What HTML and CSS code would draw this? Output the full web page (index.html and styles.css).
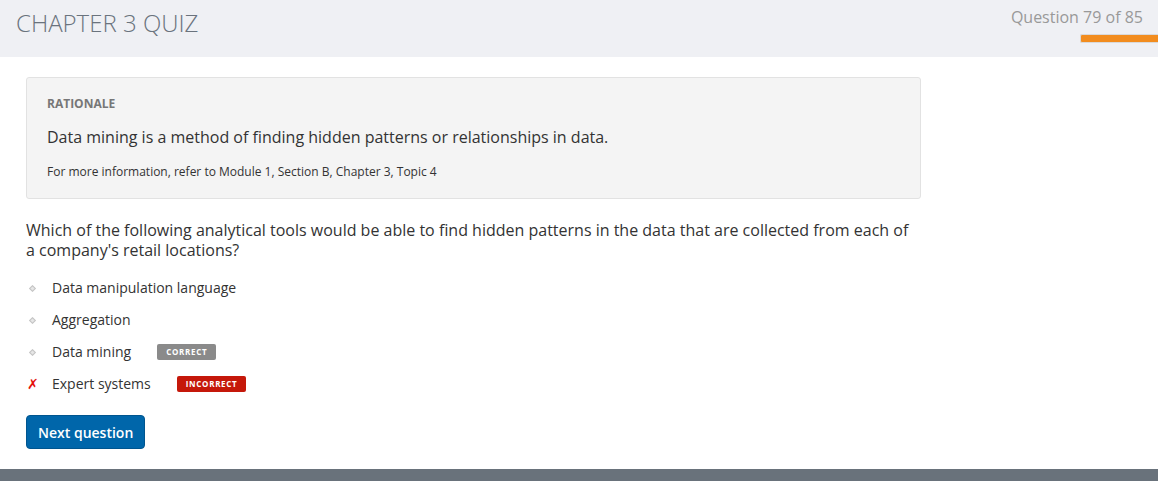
FILE: index.html
```html
<!DOCTYPE html>
<html>
<head>
<meta charset="utf-8">
<link rel="stylesheet" href="styles.css">
</head>
<body>
<header class="topbar">
  <h1 class="title">CHAPTER 3 QUIZ</h1>
  <div class="progress">
    <div class="progress-label">Question 79 of 85</div>
    <div class="progress-bar"></div>
  </div>
</header>
<main class="content">
  <section class="rationale">
    <div class="rationale-head">RATIONALE</div>
    <p class="rationale-text">Data mining is a method of finding hidden patterns or relationships in data.</p>
    <p class="rationale-ref">For more information, refer to Module 1, Section B, Chapter 3, Topic 4</p>
  </section>
  <p class="question">Which of the following analytical tools would be able to find hidden patterns in the data that are collected from each of a company's retail locations?</p>
  <ul class="options">
    <li class="option"><span class="marker"><span class="dot"></span></span><span class="opt-text">Data manipulation language</span></li>
    <li class="option"><span class="marker"><span class="dot"></span></span><span class="opt-text">Aggregation</span></li>
    <li class="option"><span class="marker"><span class="dot"></span></span><span class="opt-text">Data mining</span><span class="badge badge-correct">CORRECT</span></li>
    <li class="option"><span class="marker"><span class="cross">✗</span></span><span class="opt-text">Expert systems</span><span class="badge badge-incorrect">INCORRECT</span></li>
  </ul>
  <button class="next">Next question</button>
</main>
<footer class="footer"></footer>
</body>
</html>
```
FILE: styles.css
```css
html, body {
  margin: 0;
  padding: 0;
  background: #ffffff;
  font-family: "Open Sans", "Liberation Sans", sans-serif;
  color: #333333;
}
.topbar {
  height: 57px;
  background: #eff0f4;
  display: flex;
  justify-content: space-between;
  align-items: flex-start;
}
.title {
  margin: 0;
  padding: 7px 0 0 16px;
  font-size: 24px;
  font-weight: 300;
  line-height: 32px;
  color: #6a737d;
}
.progress {
  display: flex;
  flex-direction: column;
  align-items: flex-end;
  padding-top: 6px;
}
.progress-label {
  font-size: 16px;
  line-height: 22px;
  color: #999999;
  padding-right: 15px;
}
.progress-bar {
  margin-top: 6px;
  width: 77px;
  height: 7px;
  background: #f28c1e;
  border: 1px solid #d9d9d9;
  border-right: none;
  border-radius: 2px 0 0 2px;
}
.content {
  padding: 20px 26px 19px 26px;
}
.rationale {
  width: 853px;
  background: #f4f4f4;
  border: 1px solid #e2e2e2;
  border-radius: 3px;
  padding: 17px 20px 18px 20px;
}
.rationale-head {
  font-size: 12px;
  font-weight: 700;
  color: #777777;
  line-height: 18px;
}
.rationale-text {
  margin: 13px 0 0 0;
  font-size: 16px;
  line-height: 22px;
  color: #333333;
}
.rationale-ref {
  margin: 15px 0 0 0;
  font-size: 12px;
  line-height: 17px;
  color: #333333;
}
.question {
  margin: 21px 0 0 0;
  width: 890px;
  font-size: 16px;
  line-height: 20px;
  color: #333333;
}
.options {
  list-style: none;
  margin: 18px 0 0 0;
  padding: 0;
  display: flex;
  flex-direction: column;
  gap: 12px;
}
.option {
  display: flex;
  align-items: center;
  height: 20px;
  font-size: 14px;
  color: #333333;
}
.marker {
  width: 26px;
  display: flex;
  align-items: center;
}
.dot {
  width: 3px;
  height: 3px;
  margin-left: 4px;
  border: 1px solid #c4c4c4;
  background: #e6e6e6;
  transform: rotate(45deg);
}
.cross {
  color: #e4100b;
  font-size: 14px;
  font-weight: 700;
  font-style: italic;
  line-height: 20px;
  margin-left: 1px;
  font-family: "DejaVu Sans", sans-serif;
}
.opt-text {
  line-height: 20px;
}
.badge {
  display: inline-block;
  font-size: 8px;
  font-weight: 700;
  letter-spacing: 0.7px;
  color: #ffffff;
  line-height: 16px;
  height: 16px;
  padding: 0 9px;
  border-radius: 2px;
  margin-left: 26px;
}
.badge-correct {
  background: #8a8a8a;
}
.badge-incorrect {
  background: #c5180a;
}
.next {
  margin-top: 21px;
  display: block;
  background: #0066aa;
  color: #ffffff;
  border: 1px solid #00558f;
  border-radius: 4px;
  font-family: "Open Sans", "Liberation Sans", sans-serif;
  font-size: 14px;
  font-weight: 600;
  height: 34px;
  padding: 0 11px;
}
.footer {
  height: 14px;
  margin-top: 1px;
  background: #69727b;
}
```
